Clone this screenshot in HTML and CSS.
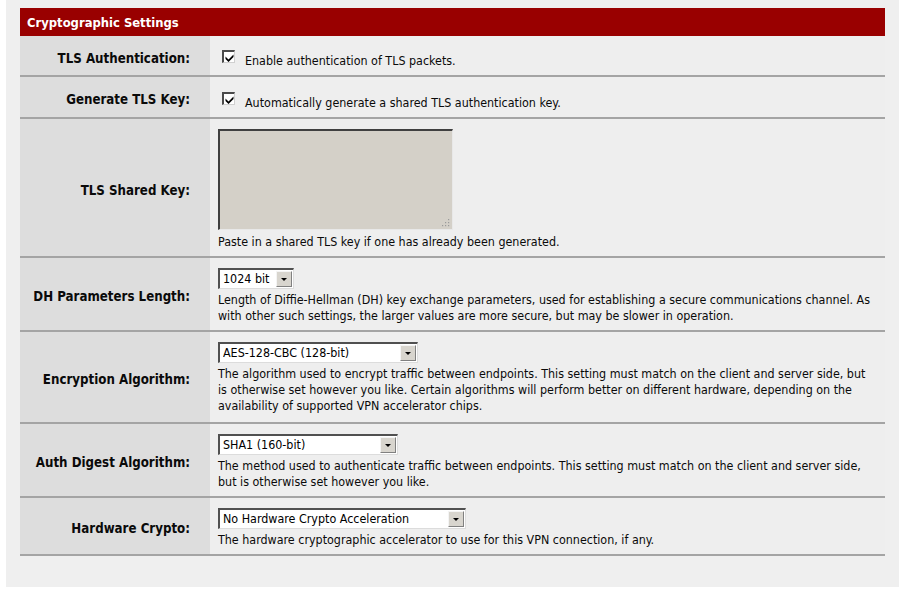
FILE: index.html
```html
<!DOCTYPE html>
<html>
<head>
<meta charset="utf-8">
<title>Cryptographic Settings</title>
<link rel="stylesheet" href="styles.css">
</head>
<body>
<div class="panel">
  <div class="settings">
    <div class="header">Cryptographic Settings</div>

    <div class="row row-check">
      <div class="label">TLS Authentication:</div>
      <div class="value">
        <div class="check-line">
          <span class="checkbox"><svg width="9" height="9" viewBox="0 0 9 9"><path d="M0.5 3.5 L3.5 6.5 L8.5 1.5 L8.5 4 L3.5 9 L0.5 6 Z" fill="#000"/></svg></span>
          <span class="check-text">Enable authentication of TLS packets.</span>
        </div>
      </div>
    </div>

    <div class="row row-check row-check2">
      <div class="label">Generate TLS Key:</div>
      <div class="value">
        <div class="check-line">
          <span class="checkbox"><svg width="9" height="9" viewBox="0 0 9 9"><path d="M0.5 3.5 L3.5 6.5 L8.5 1.5 L8.5 4 L3.5 9 L0.5 6 Z" fill="#000"/></svg></span>
          <span class="check-text">Automatically generate a shared TLS authentication key.</span>
        </div>
      </div>
    </div>

    <div class="row">
      <div class="label">TLS Shared Key:</div>
      <div class="value">
        <div class="textarea">
          <span class="grip"><svg width="9" height="9" viewBox="0 0 9 9"><g fill="#9a9a9a"><rect x="7" y="1" width="1.2" height="1.2"/><rect x="4" y="4" width="1.2" height="1.2"/><rect x="7" y="4" width="1.2" height="1.2"/><rect x="1" y="7" width="1.2" height="1.2"/><rect x="4" y="7" width="1.2" height="1.2"/><rect x="7" y="7" width="1.2" height="1.2"/></g></svg></span>
        </div>
        <div class="help">Paste in a shared TLS key if one has already been generated.</div>
      </div>
    </div>

    <div class="row">
      <div class="label">DH Parameters Length:</div>
      <div class="value">
        <div class="select sel-dh"><span class="select-text">1024 bit</span><span class="select-btn"><span class="arrow"></span></span></div>
        <div class="help">Length of Diffie-Hellman (DH) key exchange parameters, used for establishing a secure communications channel. As<br>with other such settings, the larger values are more secure, but may be slower in operation.</div>
      </div>
    </div>

    <div class="row row-enc">
      <div class="label">Encryption Algorithm:</div>
      <div class="value">
        <div class="select sel-enc"><span class="select-text">AES-128-CBC (128-bit)</span><span class="select-btn"><span class="arrow"></span></span></div>
        <div class="help">The algorithm used to encrypt traffic between endpoints. This setting must match on the client and server side, but<br>is otherwise set however you like. Certain algorithms will perform better on different hardware, depending on the<br>availability of supported VPN accelerator chips.</div>
      </div>
    </div>

    <div class="row">
      <div class="label">Auth Digest Algorithm:</div>
      <div class="value">
        <div class="select sel-auth"><span class="select-text">SHA1 (160-bit)</span><span class="select-btn"><span class="arrow"></span></span></div>
        <div class="help">The method used to authenticate traffic between endpoints. This setting must match on the client and server side,<br>but is otherwise set however you like.</div>
      </div>
    </div>

    <div class="row">
      <div class="label">Hardware Crypto:</div>
      <div class="value">
        <div class="select sel-hw"><span class="select-text">No Hardware Crypto Acceleration</span><span class="select-btn"><span class="arrow"></span></span></div>
        <div class="help">The hardware cryptographic accelerator to use for this VPN connection, if any.</div>
      </div>
    </div>
  </div>
</div>
</body>
</html>
```

FILE: styles.css
```css
html, body {
  margin: 0;
  padding: 0;
  background: #ffffff;
}

body {
  font-family: "DejaVu Sans Condensed", "DejaVu Sans", sans-serif;
  font-size: 12.4px;
  color: #000;
}

.panel {
  margin-left: 6px;
  width: 893px;
  box-sizing: border-box;
  padding: 8px 14px 31px;
  background: #efefef;
}

.settings {
  display: flex;
  flex-direction: column;
}

.header {
  height: 28px;
  display: flex;
  align-items: center;
  padding-left: 7px;
  background: #990000;
  color: #fff;
  font-weight: bold;
  font-size: 12.9px;
}

.row {
  display: flex;
  border-bottom: 2px solid #a4a4a4;
}

.label {
  width: 190px;
  flex: none;
  box-sizing: border-box;
  display: flex;
  align-items: center;
  justify-content: flex-end;
  padding-right: 20px;
  padding-top: 5px;
  background: #dddddd;
  font-weight: bold;
  font-size: 13.2px;
  color: #0a0a0a;
}

.value {
  flex: 1;
  background: #eeeeee;
  padding: 10px 12px 6px 8px;
  line-height: 16px;
  color: #0a0a0a;
}

.row-enc .value {
  padding-bottom: 8px;
}

.row-check .value {
  padding-top: 12px;
  padding-bottom: 6px;
}

.row-check2 .value {
  padding-top: 13px;
  padding-bottom: 6px;
}

.check-line {
  display: flex;
  align-items: flex-start;
}

.checkbox {
  width: 13px;
  height: 13px;
  flex: none;
  box-sizing: border-box;
  margin: 2px 10px 0 4px;
  background: #fff;
  border-top: 2px solid #4a4a4a;
  border-left: 2px solid #4a4a4a;
  border-right: 1px solid #d0d0d0;
  border-bottom: 1px solid #d0d0d0;
  display: flex;
  align-items: center;
  justify-content: center;
}

.checkbox svg {
  display: block;
}

.check-text {
  padding-top: 5px;
  line-height: 16px;
}

.textarea {
  position: relative;
  width: 235px;
  height: 101px;
  box-sizing: border-box;
  background: #d4d0c8;
  border-top: 2px solid #404040;
  border-left: 2px solid #404040;
  border-right: 1px solid #e8e8e8;
  border-bottom: 1px solid #e8e8e8;
  margin-bottom: 4px;
}

.grip {
  position: absolute;
  right: 2px;
  bottom: 2px;
  width: 9px;
  height: 9px;
}

.grip svg {
  display: block;
}

.select {
  display: flex;
  align-items: center;
  height: 21px;
  box-sizing: border-box;
  background: #fff;
  border-top: 2px solid #505050;
  border-left: 2px solid #505050;
  border-right: 1px solid #dcdcdc;
  border-bottom: 1px solid #dcdcdc;
  margin-bottom: 3px;
  padding-left: 3px;
  line-height: 16px;
  color: #000;
}

.sel-dh { width: 76px; }
.sel-enc { width: 200px; }
.sel-auth { width: 180px; }
.sel-hw { width: 248px; }

.select-text {
  flex: 1;
  white-space: nowrap;
  overflow: hidden;
}

.select-btn {
  width: 16px;
  height: 16px;
  box-sizing: border-box;
  margin-right: 1px;
  background: #d8d5ce;
  border-top: 1px solid #f4f4f4;
  border-left: 1px solid #f4f4f4;
  border-right: 1px solid #808080;
  border-bottom: 1px solid #808080;
  display: flex;
  align-items: center;
  justify-content: center;
}

.arrow {
  width: 0;
  height: 0;
  border-left: 3px solid transparent;
  border-right: 3px solid transparent;
  border-top: 3px solid #000;
}

.help {
  white-space: nowrap;
}
```
